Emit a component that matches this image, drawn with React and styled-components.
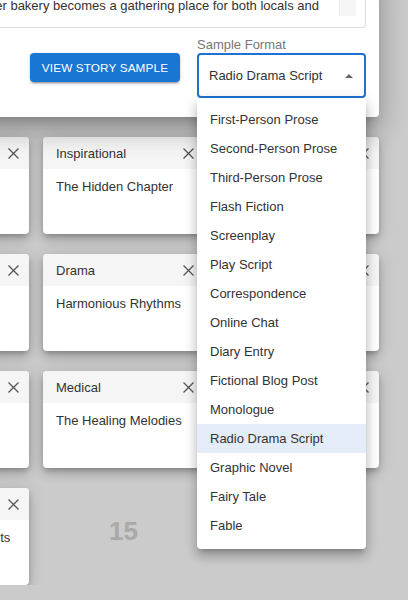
import React from 'react';
import styled, { createGlobalStyle } from 'styled-components';

const GlobalStyle = createGlobalStyle`
  html, body {
    margin: 0;
    padding: 0;
    background: #cbcbcb;
    overflow: hidden;
    font-family: "Liberation Sans", Arial, Helvetica, sans-serif;
    color: #333;
  }
`;

const Page = styled.div`
  margin: -30px 0 0 -132px;
  width: 511px;
  display: flex;
  flex-direction: column;
`;

const Panel = styled.div`
  position: relative;
  z-index: 2;
  margin-left: 92px;
  width: 419px;
  box-sizing: border-box;
  padding: 0 13px 19px 13px;
  background: #fff;
  border-radius: 0 0 4px 4px;
  box-shadow: 0 8px 10px -5px rgba(0,0,0,0.2), 0 16px 24px 2px rgba(0,0,0,0.14), 0 6px 30px 5px rgba(0,0,0,0.12);
`;

const TextBox = styled.div`
  display: flex;
  border: 1px solid #dedede;
  border-top: none;
  border-radius: 0 0 4px 4px;
  padding: 0 9px 11px 14px;
`;

const TextLines = styled.div`
  flex: 1;
  overflow: hidden;
  padding-top: 6px;
  font-size: 13px;
  line-height: 20px;
  color: #333;
  > div {
    white-space: nowrap;
  }
`;

const ScrollTrack = styled.div`
  width: 16px;
  background: #f6f6f6;
  border-left: 1px solid #ececec;
`;

const Controls = styled.div`
  display: flex;
  justify-content: flex-end;
  align-items: center;
  gap: 17px;
  margin-top: 9px;
`;

const Button = styled.button`
  height: 29px;
  width: 150px;
  border: none;
  border-radius: 4px;
  background: #1976d2;
  color: #fff;
  font-family: inherit;
  font-size: 11.8px;
  letter-spacing: 0.1px;
  text-transform: uppercase;
  box-shadow: 0 3px 1px -2px rgba(0,0,0,0.2), 0 2px 2px rgba(0,0,0,0.14), 0 1px 5px rgba(0,0,0,0.12);
  padding: 0;
`;

const SelectGroup = styled.div`
  display: flex;
  flex-direction: column;
  width: 169px;
`;

const Label = styled.div`
  font-size: 13px;
  line-height: 15px;
  color: #777;
  margin-bottom: 1px;
`;

const SelectWrap = styled.div`
  position: relative;
`;

const SelectBox = styled.div`
  height: 45px;
  box-sizing: border-box;
  border: 2px solid #1f72d3;
  border-radius: 4px;
  display: flex;
  align-items: center;
  justify-content: space-between;
  padding: 0 11px 0 10px;
  font-size: 13px;
  color: #333;
`;

const Arrow = styled.span`
  width: 0;
  height: 0;
  border-left: 4px solid transparent;
  border-right: 4px solid transparent;
  border-bottom: 4px solid #666;
`;

const Menu = styled.ul`
  position: absolute;
  top: 100%;
  left: 0;
  width: 169px;
  margin: 0;
  padding: 7px 0 9px;
  list-style: none;
  background: #fff;
  border-radius: 4px;
  box-shadow: 0 5px 5px -3px rgba(0,0,0,0.2), 0 8px 10px 1px rgba(0,0,0,0.14), 0 3px 14px 2px rgba(0,0,0,0.12);
`;

const MenuItem = styled.li`
  height: 29px;
  line-height: 29px;
  padding-left: 13px;
  font-size: 13px;
  color: #333;
  background: ${(p) => (p.$selected ? '#e3ecf8' : 'transparent')};
`;

const Grid = styled.div`
  display: grid;
  grid-template-columns: repeat(3, 161px);
  grid-auto-rows: 97px;
  column-gap: 14px;
  row-gap: 20px;
  margin-top: 20px;
`;

const Card = styled.div`
  background: #fff;
  border-radius: 4px;
  overflow: hidden;
  box-shadow: 0 3px 5px -1px rgba(0,0,0,0.2), 0 6px 10px rgba(0,0,0,0.14), 0 1px 18px rgba(0,0,0,0.12);
`;

const CardHeader = styled.div`
  height: 32px;
  background: #f5f5f5;
  display: flex;
  align-items: center;
  justify-content: space-between;
  padding: 0 10px 0 13px;
  font-size: 13px;
  color: #333;
`;

const CardBody = styled.div`
  padding: 8px 13px;
  font-size: 13px;
  line-height: 20px;
  color: #333;
  white-space: nowrap;
`;

const CountCell = styled.div`
  display: flex;
  align-items: center;
  justify-content: center;
  padding-bottom: 10px;
  font-size: 26px;
  font-weight: bold;
  color: #a9a9a9;
`;

const CloseIcon = () => (
  <svg width="11" height="11" viewBox="0 0 11 11">
    <path d="M0.5 0.5 L10.5 10.5 M10.5 0.5 L0.5 10.5" stroke="#555" strokeWidth="1.3" fill="none" />
  </svg>
);

const formats = [
  'First-Person Prose',
  'Second-Person Prose',
  'Third-Person Prose',
  'Flash Fiction',
  'Screenplay',
  'Play Script',
  'Correspondence',
  'Online Chat',
  'Diary Entry',
  'Fictional Blog Post',
  'Monologue',
  'Radio Drama Script',
  'Graphic Novel',
  'Fairy Tale',
  'Fable',
];

const stories = [
  { genre: 'Mystery', title: 'The Silent Witness' },
  { genre: 'Inspirational', title: 'The Hidden Chapter' },
  { genre: 'Romance', title: 'Letters in Bloom' },
  { genre: 'Fantasy', title: 'The Dragon Keeper' },
  { genre: 'Drama', title: 'Harmonious Rhythms' },
  { genre: 'Comedy', title: 'Kitchen Chaos' },
  { genre: 'Adventure', title: 'Beyond the Ridge' },
  { genre: 'Medical', title: 'The Healing Melodies' },
  { genre: 'Sci-Fi', title: 'Stellar Drift' },
  { genre: 'Historical', title: 'The Forgotten Secrets' },
];

export default function App() {
  const selected = 'Radio Drama Script';
  return (
    <>
      <GlobalStyle />
      <Page>
        <Panel>
          <TextBox>
            <TextLines>
              <div>A young widow opens a small bakery by the sea. Over time,</div>
              <div>her bakery becomes a gathering place for both locals and</div>
            </TextLines>
            <ScrollTrack />
          </TextBox>
          <Controls>
            <Button>View Story Sample</Button>
            <SelectGroup>
              <Label>Sample Format</Label>
              <SelectWrap>
                <SelectBox>
                  <span>{selected}</span>
                  <Arrow />
                </SelectBox>
                <Menu>
                  {formats.map((f) => (
                    <MenuItem key={f} $selected={f === selected}>{f}</MenuItem>
                  ))}
                </Menu>
              </SelectWrap>
            </SelectGroup>
          </Controls>
        </Panel>
        <Grid>
          {stories.map((s) => (
            <Card key={s.title}>
              <CardHeader>
                <span>{s.genre}</span>
                <CloseIcon />
              </CardHeader>
              <CardBody>{s.title}</CardBody>
            </Card>
          ))}
          <CountCell>15</CountCell>
        </Grid>
      </Page>
    </>
  );
}
